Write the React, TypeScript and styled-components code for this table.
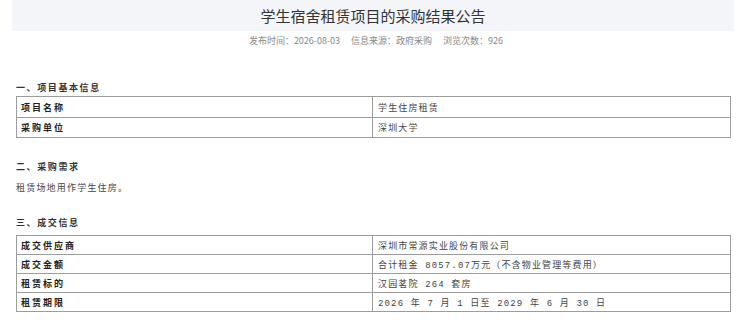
import React from "react";
import styled, { createGlobalStyle } from "styled-components";

const Global = createGlobalStyle`
  html, body { margin: 0; padding: 0; background: #ffffff; }
  body { font-family: "Noto Sans CJK SC", "Noto Sans", sans-serif; color: #333; }
`;

const Page = styled.div`
  width: 740px;
  height: 326px;
  overflow: hidden;
`;

const TitleBar = styled.div`
  margin: 0 6px 0 12px;
  height: 31px;
  background: #f3f5f9;
  display: flex;
  align-items: center;
  justify-content: center;
`;

const Title = styled.h1`
  margin: 0;
  font-size: 15px;
  font-weight: 400;
  color: #333;
  line-height: 20px;
`;

const Meta = styled.div`
  margin: 3px 0 0 12px;
  display: flex;
  justify-content: center;
  gap: 11px;
  font-size: 9px;
  line-height: 14px;
  color: #888;
`;

const Content = styled.div`
  margin: 0 9px 0 16px;
`;

const SectionHeading = styled.div<{ $top: number; $bottom: number }>`
  margin-top: ${(p) => p.$top}px;
  margin-bottom: ${(p) => p.$bottom}px;
  font-size: 9px;
  line-height: 14px;
  font-weight: 700;
  letter-spacing: 1.6px;
  color: #333;
`;

const Paragraph = styled.p`
  margin: 7px 0 0;
  font-size: 9px;
  line-height: 14px;
  letter-spacing: 1.2px;
  color: #444;
`;

const Table = styled.table`
  width: 715px;
  border-collapse: collapse;
  table-layout: fixed;
`;

const Row = styled.tr<{ $h: number }>`
  height: ${(p) => p.$h}px;
`;

const LabelCell = styled.td`
  width: 347px;
  border: 1px solid #9c9c9c;
  padding: 0 4px;
  font-size: 9px;
  font-weight: 700;
  letter-spacing: 2px;
  color: #222;
  vertical-align: middle;
`;

const ValueCell = styled.td`
  border: 1px solid #9c9c9c;
  padding: 0 5px;
  font-family: "Liberation Mono", "Noto Sans CJK SC", monospace;
  font-size: 9px;
  letter-spacing: 1.15px;
  color: #444;
  vertical-align: middle;
`;

const basic = [
  ["项目名称", "学生住房租赁"],
  ["采购单位", "深圳大学"],
];

const deal = [
  ["成交供应商", "深圳市常源实业股份有限公司"],
  ["成交金额", "合计租金 8057.07万元（不含物业管理等费用）"],
  ["租赁标的", "汉园茗院 264 套房"],
  ["租赁期限", "2026 年 7 月 1 日至 2029 年 6 月 30 日"],
];

export default function App() {
  return (
    <Page>
      <Global />
      <TitleBar>
        <Title>学生宿舍租赁项目的采购结果公告</Title>
      </TitleBar>
      <Meta>
        <span>发布时间：2026-08-03</span>
        <span>信息来源：政府采购</span>
        <span>浏览次数：926</span>
      </Meta>
      <Content>
        <SectionHeading $top={33} $bottom={1}>一、项目基本信息</SectionHeading>
        <Table>
          <tbody>
            {basic.map(([k, v], i) => (
              <Row key={k} $h={i === 0 ? 21 : 20}>
                <LabelCell>{k}</LabelCell>
                <ValueCell>{v}</ValueCell>
              </Row>
            ))}
          </tbody>
        </Table>
        <SectionHeading $top={22} $bottom={0}>二、采购需求</SectionHeading>
        <Paragraph>租赁场地用作学生住房。</Paragraph>
        <SectionHeading $top={21} $bottom={5}>三、成交信息</SectionHeading>
        <Table>
          <tbody>
            {deal.map(([k, v]) => (
              <Row key={k} $h={19}>
                <LabelCell>{k}</LabelCell>
                <ValueCell>{v}</ValueCell>
              </Row>
            ))}
          </tbody>
        </Table>
      </Content>
    </Page>
  );
}
